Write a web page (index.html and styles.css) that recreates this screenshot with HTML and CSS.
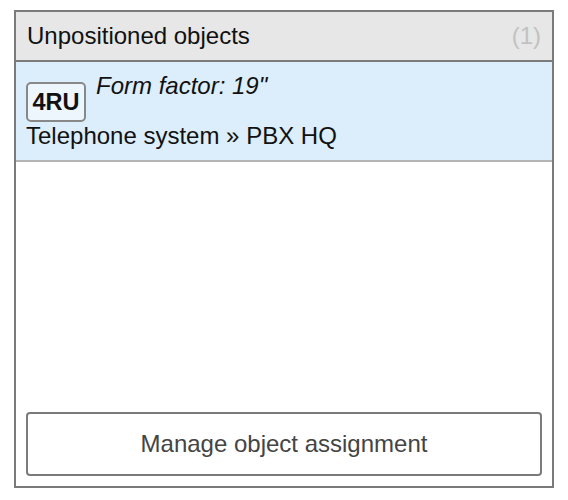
FILE: index.html
```html
<!DOCTYPE html>
<html>
<head>
<meta charset="utf-8">
<link rel="stylesheet" href="styles.css">
</head>
<body>
<div class="panel">
  <div class="panel-header">
    <span class="panel-title">Unpositioned objects</span>
    <span class="panel-count">(1)</span>
  </div>
  <div class="panel-list">
    <div class="item">
      <div class="item-top">
        <span class="badge">4RU</span>
        <span class="form-factor">Form factor: 19"</span>
      </div>
      <div class="item-name">Telephone system » PBX HQ</div>
    </div>
  </div>
  <div class="panel-footer">
    <button class="manage-btn">Manage object assignment</button>
  </div>
</div>
</body>
</html>
```

FILE: styles.css
```css
* { box-sizing: border-box; }
html, body { margin: 0; padding: 0; background: #ffffff; }
body {
  font-family: "Liberation Sans", Arial, sans-serif;
  font-size: 24px;
  line-height: 28px;
  color: #111;
}
.panel {
  margin: 10px 0 0 14px;
  width: 540px;
  height: 478px;
  border: 2px solid #7b7b7b;
  display: flex;
  flex-direction: column;
}
.panel-header {
  display: flex;
  justify-content: space-between;
  padding: 10px 11px 10px 11px;
  background: #e6e7e6;
  border-bottom: 2px solid #7b7b7b;
}
.panel-count { color: #c2c2c2; }
.panel-list { flex: 1; }
.item {
  background: #dcedfb;
  border-bottom: 2px solid #b4b4b4;
  padding: 10px 10px 10px 10px;
}
.item-top {
  display: flex;
  align-items: flex-start;
}
.badge {
  margin-top: 10px;
  width: 60px;
  height: 40px;
  border: 2px solid #888;
  border-radius: 5px;
  background: #eef6fd;
  font-weight: bold;
  font-size: 23.5px;
  line-height: 36px;
  text-align: center;
}
.form-factor {
  font-style: italic;
  margin-left: 10px;
}
.panel-footer { padding: 0 10px 10px 10px; }
.manage-btn {
  display: block;
  width: 100%;
  height: 64px;
  border: 2px solid #7b7b7b;
  border-radius: 4px;
  background: #fff;
  font-family: "Liberation Sans", Arial, sans-serif;
  font-size: 24px;
  line-height: 28px;
  color: #444;
  padding: 0;
}
```
